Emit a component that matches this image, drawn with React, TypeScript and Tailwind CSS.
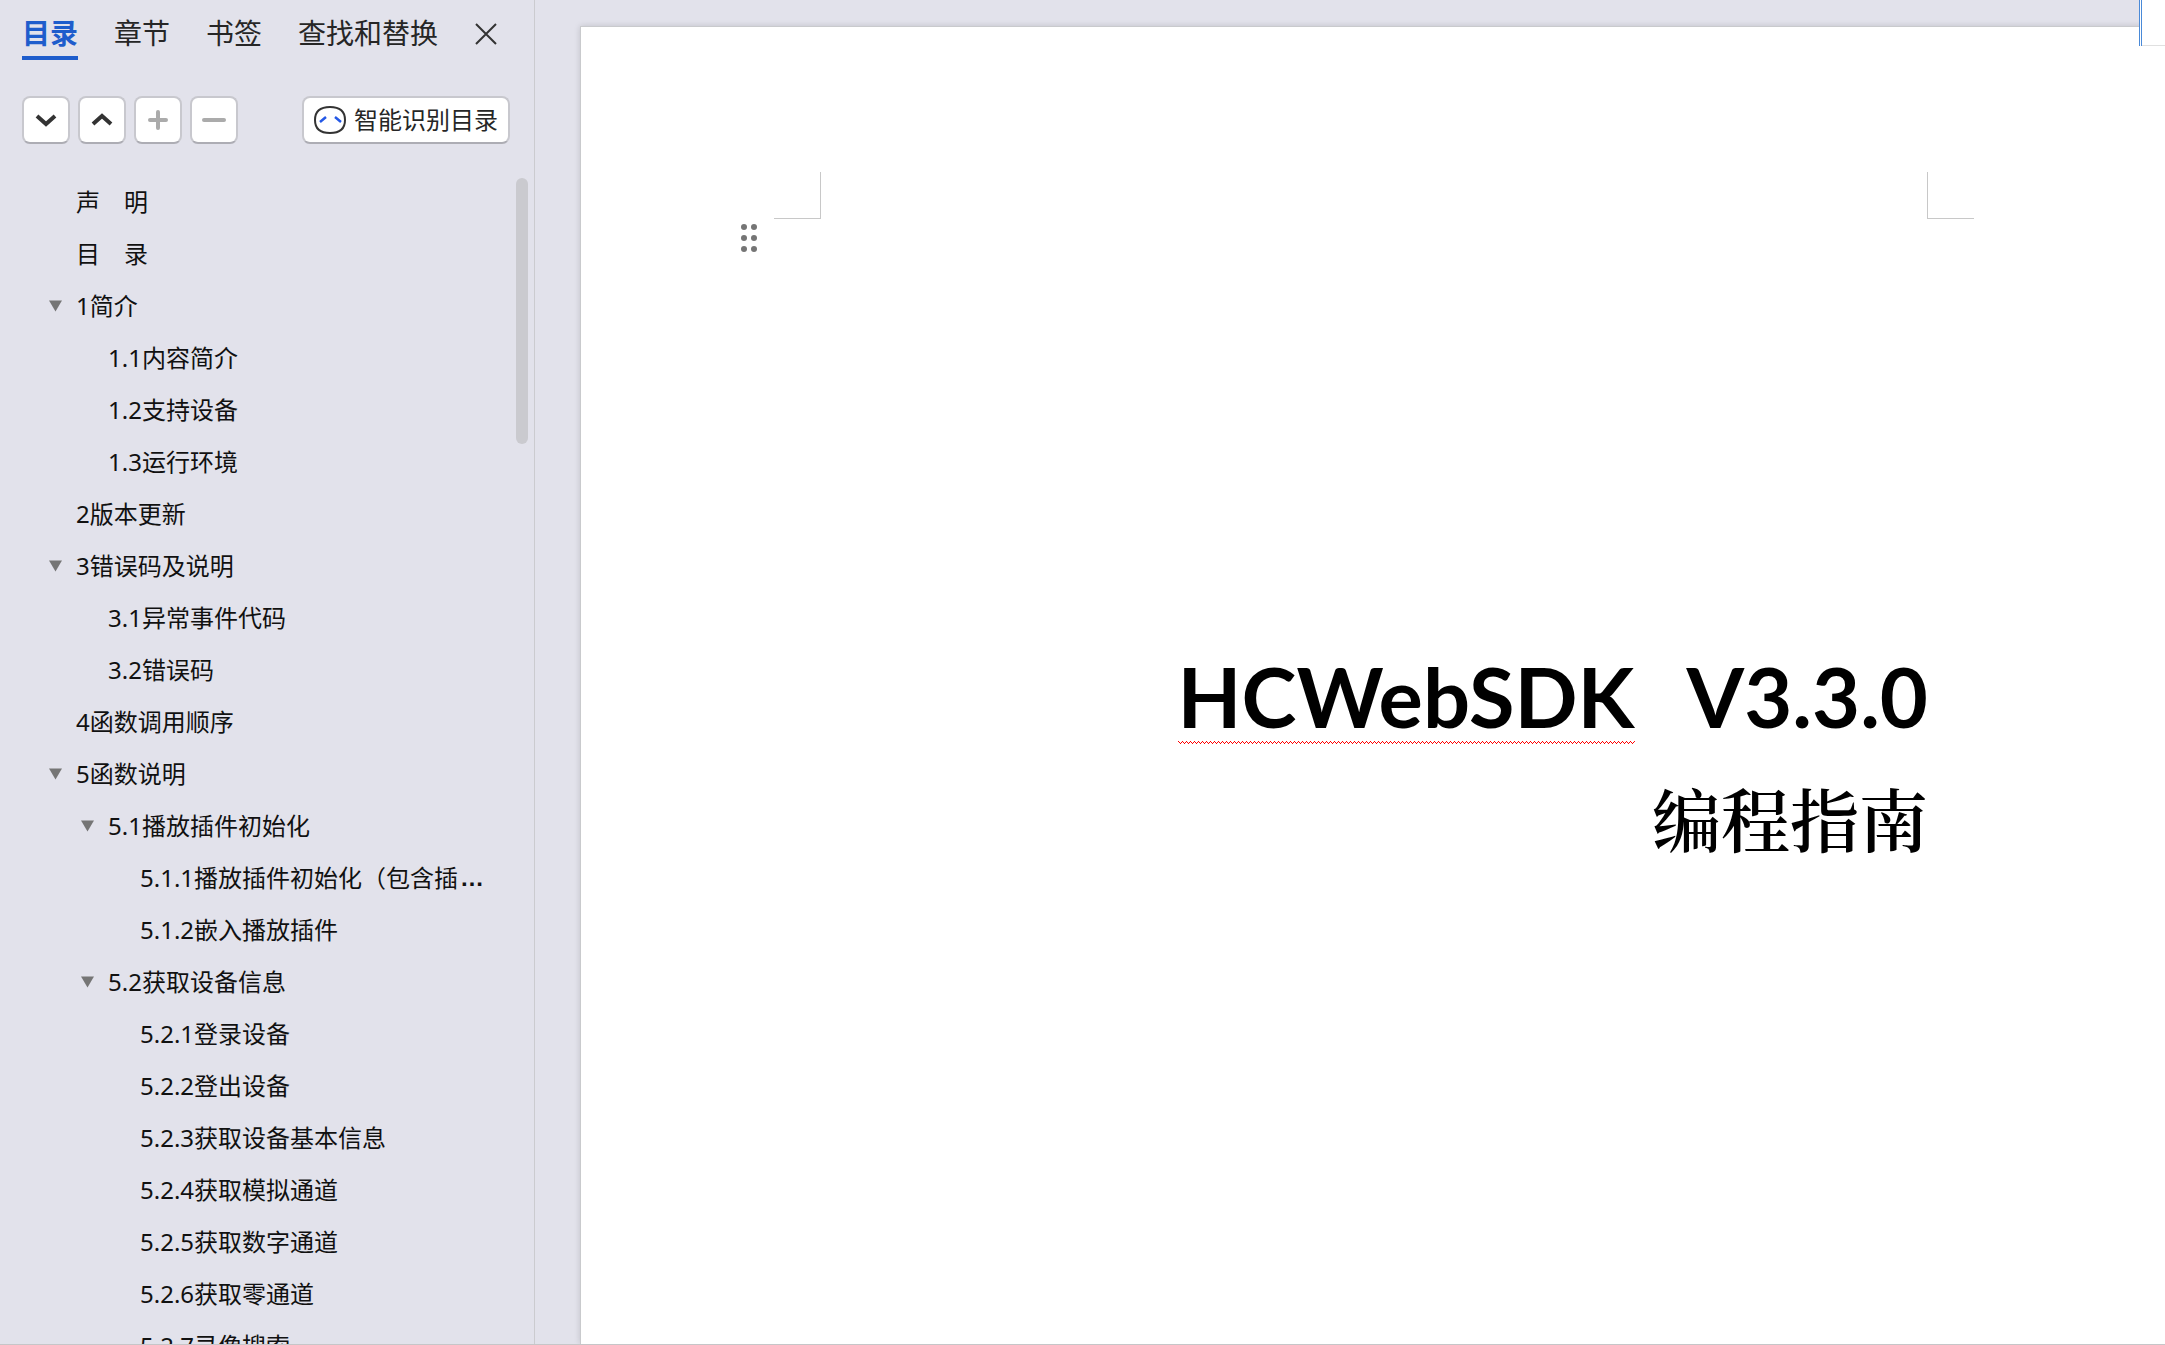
import React from "react";

type Entry = { level: number; label: string; open?: boolean; clipped?: boolean };

const entries: Entry[] = [
  { level: 1, label: "声　明" },
  { level: 1, label: "目　录" },
  { level: 1, label: "1简介", open: true },
  { level: 2, label: "1.1内容简介" },
  { level: 2, label: "1.2支持设备" },
  { level: 2, label: "1.3运行环境" },
  { level: 1, label: "2版本更新" },
  { level: 1, label: "3错误码及说明", open: true },
  { level: 2, label: "3.1异常事件代码" },
  { level: 2, label: "3.2错误码" },
  { level: 1, label: "4函数调用顺序" },
  { level: 1, label: "5函数说明", open: true },
  { level: 2, label: "5.1播放插件初始化", open: true },
  { level: 3, label: "5.1.1播放插件初始化（包含插", clipped: true },
  { level: 3, label: "5.1.2嵌入播放插件" },
  { level: 2, label: "5.2获取设备信息", open: true },
  { level: 3, label: "5.2.1登录设备" },
  { level: 3, label: "5.2.2登出设备" },
  { level: 3, label: "5.2.3获取设备基本信息" },
  { level: 3, label: "5.2.4获取模拟通道" },
  { level: 3, label: "5.2.5获取数字通道" },
  { level: 3, label: "5.2.6获取零通道" },
  { level: 3, label: "5.2.7录像搜索" },
];

const indent: Record<number, string> = { 1: "pl-[48px]", 2: "pl-[80px]", 3: "pl-[112px]" };

const box =
  "flex h-12 items-center justify-center rounded-lg border-2 border-[#c8c8ce] border-b-[#adadb4] bg-white";

function ToolButton({ label, path, color, round }: { label: string; path: string; color: string; round?: boolean }) {
  return (
    <button aria-label={label} className={`${box} w-12`}>
      <svg
        width="28"
        height="28"
        viewBox="0 0 28 28"
        fill="none"
        stroke={color}
        strokeWidth="4"
        strokeLinecap={round ? "round" : "butt"}
      >
        <path d={path} />
      </svg>
    </button>
  );
}

function Outline() {
  return (
    <aside className="flex w-[535px] shrink-0 flex-col border-r border-[#cbcbcf]">
      <nav className="flex gap-9 pt-3 pl-[22px] text-[28px] leading-10 text-[#262626]">
        <button className="h-12 border-b-4 border-[#1e5dcc] pb-0.5 font-bold text-[#1e5dcc]">目录</button>
        <button className="h-11 pb-0.5">章节</button>
        <button className="h-11 pb-0.5">书签</button>
        <button className="h-11 pb-0.5">查找和替换</button>
        <button aria-label="关闭" className="flex h-11 items-center">
          <svg width="24" height="24" viewBox="0 0 24 24" fill="none" stroke="#333" strokeWidth="2">
            <path d="M2 2L22 22M22 2L2 22" />
          </svg>
        </button>
      </nav>
      <div className="mt-9 flex gap-2 pr-6 pl-[22px]">
        <ToolButton label="展开" color="#333" path="M5 10L14 18L23 10" />
        <ToolButton label="收起" color="#333" path="M5 18L14 10L23 18" />
        <ToolButton label="升级" color="#ababab" path="M6 14H22M14 6V22" round />
        <ToolButton label="降级" color="#ababab" path="M4 14H24" round />
        <button className={`${box} ml-auto gap-2 px-[10px] text-2xl text-[#262626]`}>
          <svg width="32" height="30" viewBox="0 0 32 30" fill="none" strokeWidth="2">
            <path d="M16 2C26 2 31 6 31 15S26 28 16 28S1 24 1 15S6 2 16 2Z" stroke="#333" />
            <path d="M6 17L12 12M21 12L27 17" stroke="#2458e6" strokeWidth="2.5" />
          </svg>
          智能识别目录
        </button>
      </div>
      <div className="mt-8 flex min-h-0 flex-1">
        <ul className="min-w-0 flex-1 overflow-hidden pl-7 text-2xl text-[#111]">
          {entries.map((e) => (
            <li key={e.label}>
              <a href="#" className={`flex h-[52px] items-center whitespace-nowrap ${indent[e.level]}`}>
                {e.open && (
                  <svg className="-ml-7 mr-[14px]" width="14" height="12" viewBox="0 0 14 12" fill="#757575">
                    <path d="M1 0.500H14L7.500 11.500Z" />
                  </svg>
                )}
                {e.label}
                {e.clipped && <span className="pl-0.5 font-['Liberation_Sans',sans-serif] font-bold">…</span>}
              </a>
            </li>
          ))}
        </ul>
        <div className="mt-0.5 mr-[6px] h-[266px] w-3 rounded-full bg-[#cacacf]" />
      </div>
    </aside>
  );
}

function DocumentPage() {
  const mark = "size-[47px] border-b border-[#c8c8c8]";
  return (
    <main className="flex min-w-0 flex-1 pt-[26px] pl-[45px]">
      <article className="min-w-0 flex-1 border-t border-l border-[#c9cacd] bg-white shadow-[0_0_6px_rgba(0,0,0,0.15)]">
        <div className="mt-[145px] flex justify-between pr-[191px] pl-[193px]">
          <div className={`${mark} border-r`} />
          <div className={`${mark} border-l`} />
        </div>
        <button aria-label="段落菜单" className="mt-[5px] ml-[160px] block">
          <svg width="16" height="28" viewBox="0 0 16 28" fill="#757575">
            {[3, 14, 25].map((y) => (
              <React.Fragment key={y}>
                <circle cx="3" cy={y} r="3" />
                <circle cx="13" cy={y} r="3" />
              </React.Fragment>
            ))}
          </svg>
        </button>
        <div className="mt-[396px] px-[237px] text-right text-black">
          <h1 className="flex justify-end gap-[52px] font-['Lato',sans-serif] text-[83px] leading-[96px] font-bold">
            <span className="relative">
              HCWebSDK
              <svg className="absolute bottom-0 left-0 h-[3px] w-full">
                <defs>
                  <pattern id="wave" width="4" height="3" patternUnits="userSpaceOnUse">
                    <path d="M0 0h1v1h-1zM1 1h1v1h-1zM2 2h1v1h-1zM3 1h1v1h-1z" fill="#f00" />
                  </pattern>
                </defs>
                <rect width="100%" height="3" fill="url(#wave)" />
              </svg>
            </span>
            <span>V3.3.0</span>
          </h1>
          <h2 className="mt-6 font-['Noto_Serif_CJK_SC','Noto_Sans_CJK_SC',serif] text-[69px] leading-[100px] font-semibold">
            编程指南
          </h2>
        </div>
      </article>
    </main>
  );
}

export default function App() {
  return (
    <div className="relative flex h-screen overflow-hidden border-b border-[#c6c6c8] bg-[#e2e2eb] font-['Noto_Sans','Noto_Sans_CJK_SC',sans-serif]">
      <Outline />
      <DocumentPage />
      <div className="absolute top-0 right-0 flex h-[46px] w-[26px]">
        <div className="w-[3px] border-x border-[#4a8ad8] bg-white" />
        <div className="flex-1 border-b border-[#e0e0e0] bg-white" />
      </div>
    </div>
  );
}
